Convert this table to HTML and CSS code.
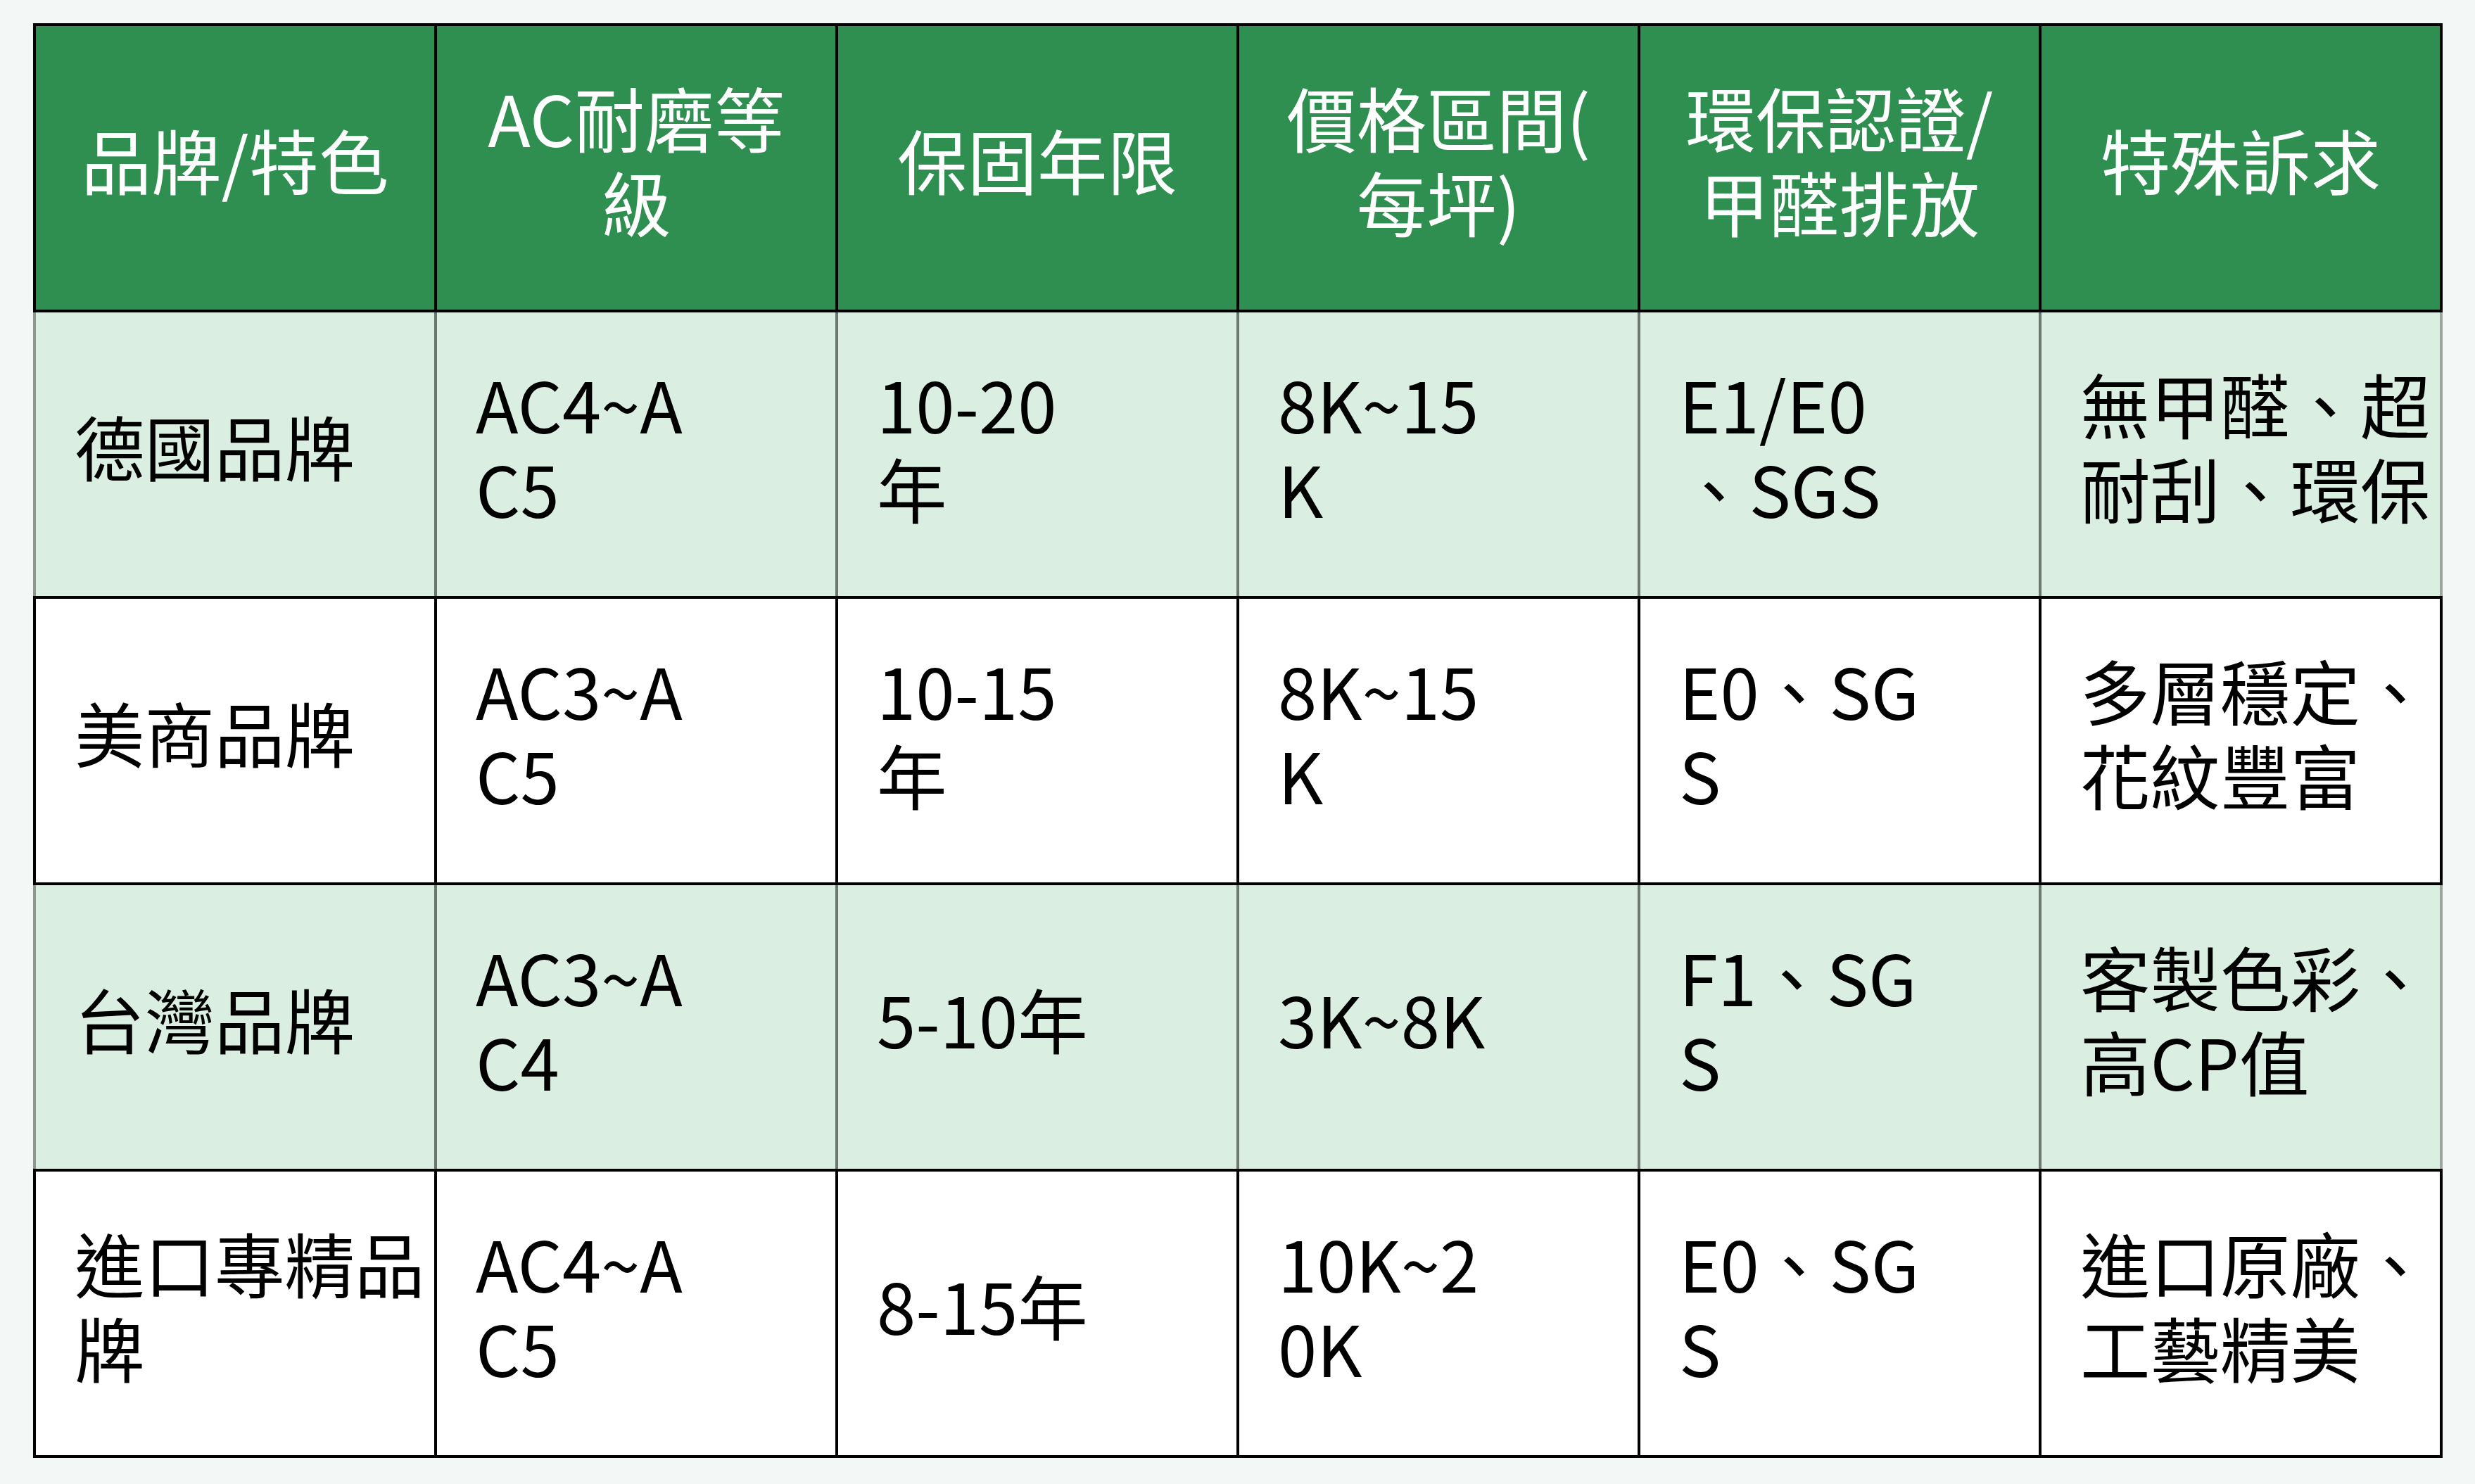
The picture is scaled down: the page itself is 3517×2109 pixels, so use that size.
FILE: index.html
```html
<!DOCTYPE html>
<html lang="zh-Hant">
<head>
<meta charset="utf-8">
<title>品牌比較表</title>
<link rel="stylesheet" href="styles.css">
</head>
<body>
<table class="compare">
  <thead>
    <tr>
      <th>品牌/特色</th>
      <th>AC耐磨等<br>級</th>
      <th>保固年限</th>
      <th>價格區間(<br>每坪)</th>
      <th>環保認證/<br>甲醛排放</th>
      <th>特殊訴求</th>
    </tr>
  </thead>
  <tbody>
    <tr class="alt">
      <td>德國品牌</td>
      <td>AC4~A<br>C5</td>
      <td>10-20<br>年</td>
      <td>8K~15<br>K</td>
      <td>E1/E0<br>、SGS</td>
      <td>無甲醛、超<br>耐刮、環保</td>
    </tr>
    <tr>
      <td>美商品牌</td>
      <td>AC3~A<br>C5</td>
      <td>10-15<br>年</td>
      <td>8K~15<br>K</td>
      <td>E0、SG<br>S</td>
      <td>多層穩定、<br>花紋豐富</td>
    </tr>
    <tr class="alt">
      <td>台灣品牌</td>
      <td>AC3~A<br>C4</td>
      <td>5-10年</td>
      <td>3K~8K</td>
      <td>F1、SG<br>S</td>
      <td>客製色彩、<br>高CP值</td>
    </tr>
    <tr>
      <td>進口專精品<br>牌</td>
      <td>AC4~A<br>C5</td>
      <td>8-15年</td>
      <td>10K~2<br>0K</td>
      <td>E0、SG<br>S</td>
      <td>進口原廠、<br>工藝精美</td>
    </tr>
  </tbody>
</table>
</body>
</html>
```

FILE: styles.css
```css
html, body {
  margin: 0;
  padding: 0;
  background: #f3f7f5;
}

body {
  padding: 33px 0 0 47px;
  font-family: "Noto Sans CJK TC", "Noto Sans CJK SC", "Noto Sans", sans-serif;
}

.compare {
  border-collapse: collapse;
  table-layout: fixed;
  width: 3424px;
}

.compare th,
.compare td {
  border: 4px solid #000;
  font-size: 99.5px;
  line-height: 120px;
  font-weight: 400;
  vertical-align: middle;
  padding: 0 0 26px 55px;
  white-space: nowrap;
  overflow: visible;
}

.compare tr {
  height: 407px;
}

.compare th {
  background: #2e8f50;
  color: #ffffff;
  text-align: center;
  padding-left: 0;
  padding-right: 0;
}

.compare td {
  background: #ffffff;
  color: #000000;
  text-align: left;
}

.compare tr.alt td {
  background: #dbeee2;
  border-left-color: #6c7770;
  border-right-color: #6c7770;
  border-top-color: #000;
  border-bottom-color: #000;
}

.compare tr.alt td:first-child {
  border-left-color: #8e9690;
}

.compare tr.alt td:last-child {
  border-right-color: #9ea5a0;
}
```
